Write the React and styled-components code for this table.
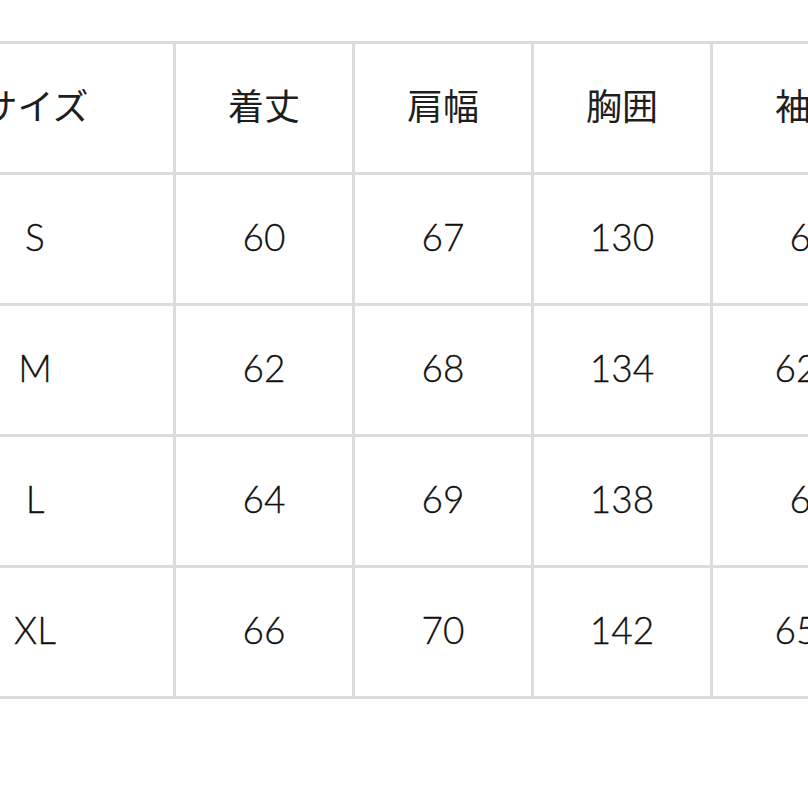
import React from 'react'
import styled, { createGlobalStyle } from 'styled-components'

const GlobalStyle = createGlobalStyle`
  html, body {
    margin: 0;
    padding: 0;
    background: #ffffff;
    overflow: hidden;
  }
`

const headers = ['サイズ', '着丈', '肩幅', '胸囲', '袖丈']

const rows = [
  ['S', '60', '67', '130', '61'],
  ['M', '62', '68', '134', '62.5'],
  ['L', '64', '69', '138', '64'],
  ['XL', '66', '70', '142', '65.5'],
]

const App = () => {
  return (
    <Page>
      <GlobalStyle />
      <SizeTable>
        {headers.map((h) => (
          <Cell key={h} head>
            {h}
          </Cell>
        ))}
        {rows.map((row) =>
          row.map((value, i) => <Cell key={row[0] + i}>{value}</Cell>)
        )}
      </SizeTable>
    </Page>
  )
}

const Page = styled.div`
  width: 808px;
  height: 808px;
  overflow: hidden;
  background: #ffffff;
  padding-top: 41px;
  box-sizing: border-box;
`

const SizeTable = styled.div`
  display: grid;
  grid-template-columns: 276px 176px 176px 176px 196px;
  grid-auto-rows: 128px;
  gap: 3px;
  padding: 3px;
  background: #dcdcdc;
  width: max-content;
  margin-left: -106px;
`

const Cell = styled.div`
  display: flex;
  align-items: center;
  justify-content: center;
  padding-bottom: ${(p) => (p.head ? '8px' : '6px')};
  box-sizing: border-box;
  background: #ffffff;
  color: ${(p) => (p.head ? '#1e1e1e' : '#111111')};
  font-family: ${(p) =>
    p.head
      ? '"Noto Sans CJK JP", "Noto Sans", sans-serif'
      : 'Lato, "Noto Sans", sans-serif'};
  font-size: ${(p) => (p.head ? '36px' : '37px')};
  font-weight: ${(p) => (p.head ? 400 : 300)};
  -webkit-text-stroke: ${(p) => (p.head ? '0' : '0.3px')};
  white-space: nowrap;
`

export default App
